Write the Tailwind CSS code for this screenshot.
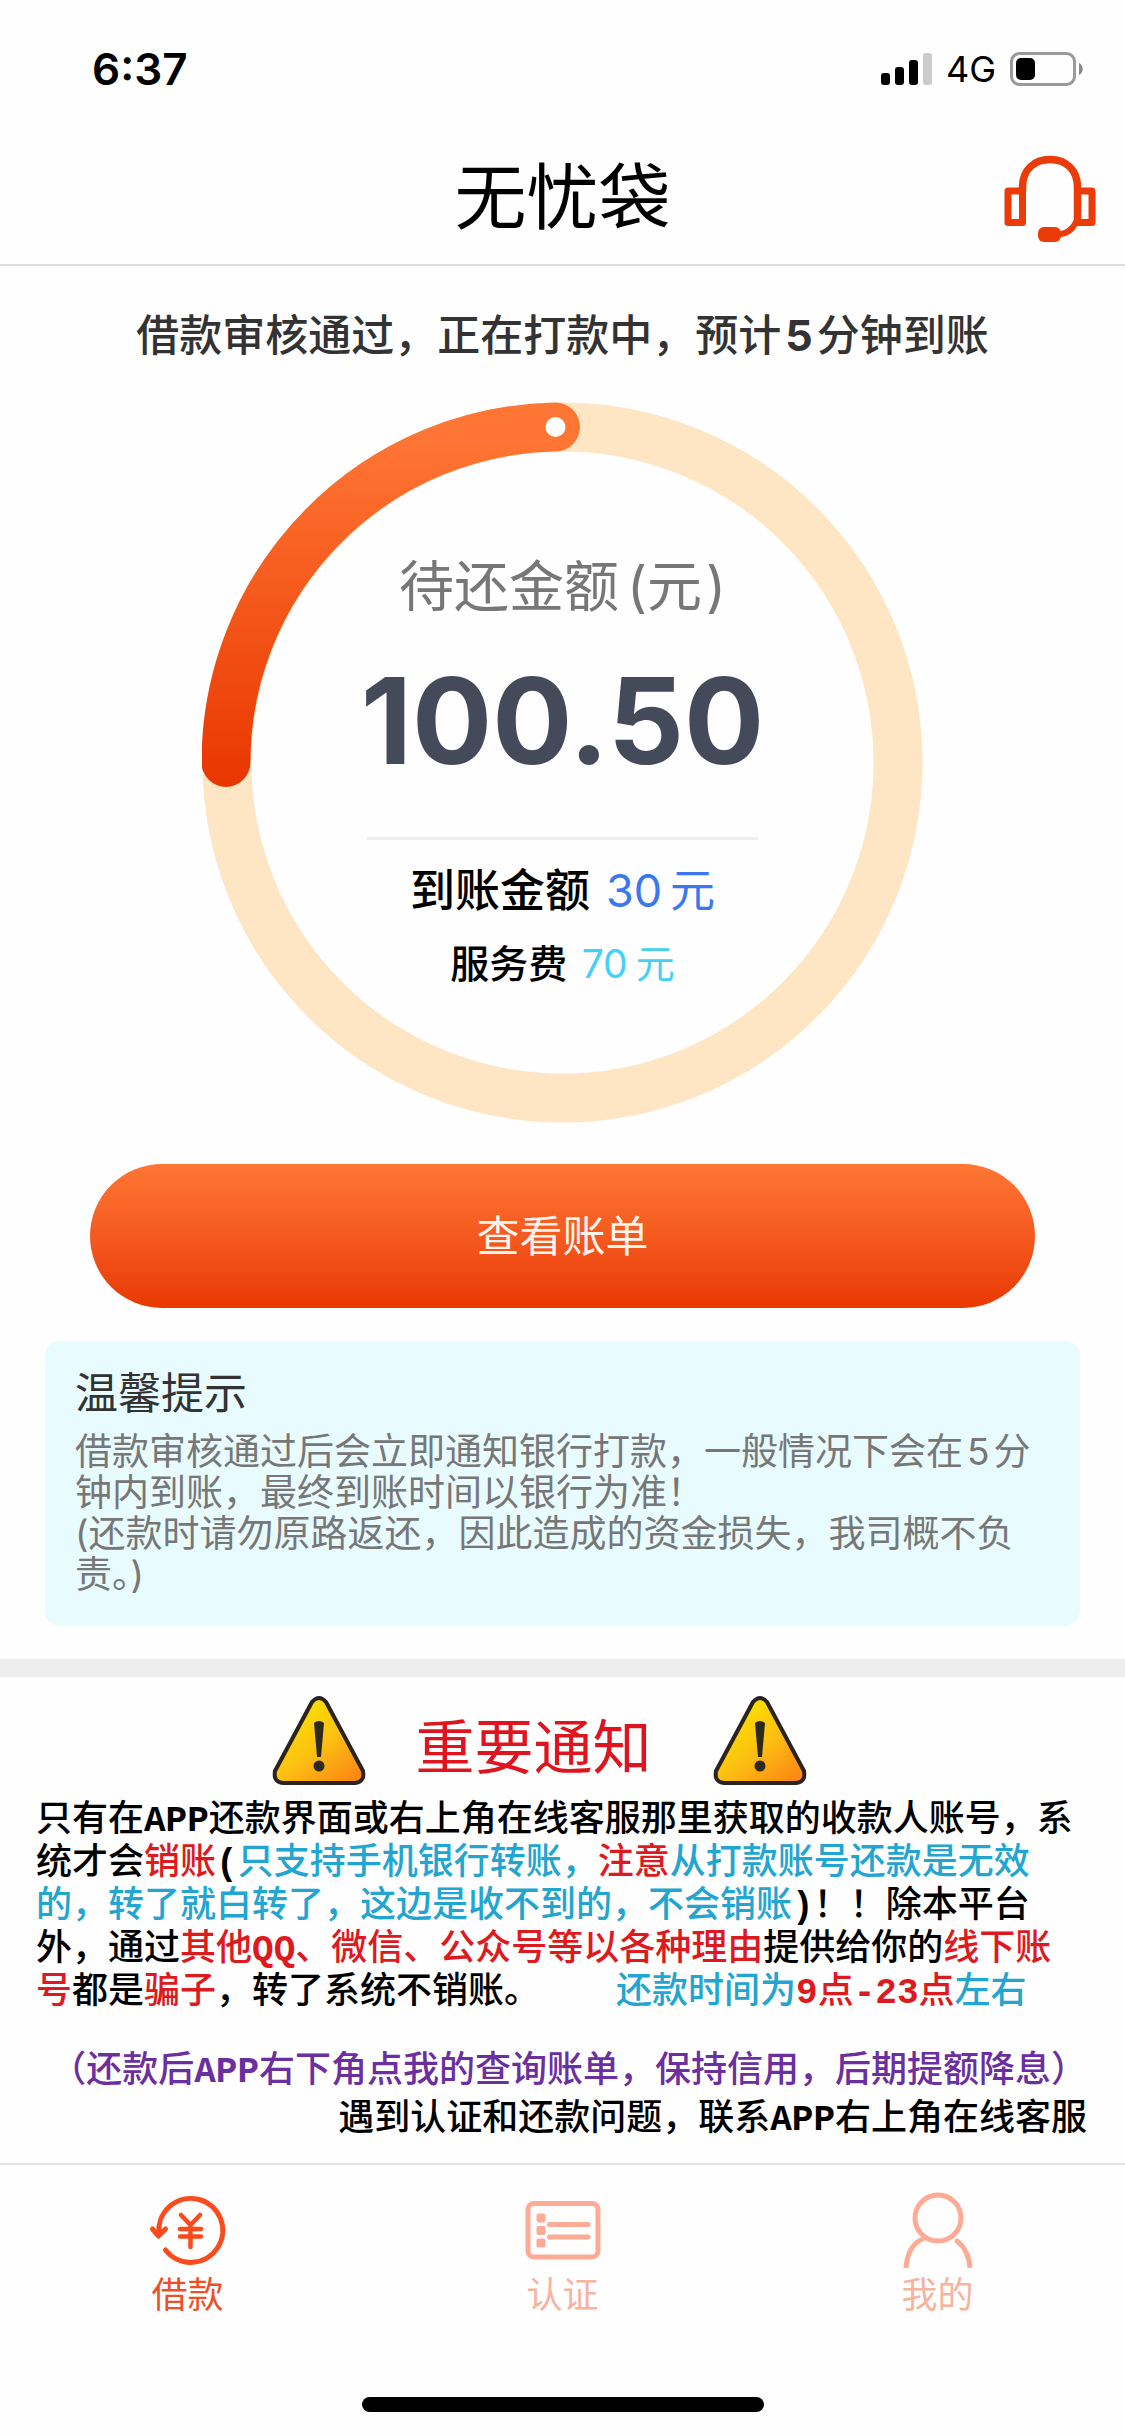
<!DOCTYPE html>
<html lang="zh-CN">
<head>
<meta charset="utf-8">
<meta name="viewport" content="width=device-width, initial-scale=1">
<title>无忧袋</title>
<script src="https://cdn.jsdelivr.net/npm/@tailwindcss/browser@4"></script>
</head>
<body class="bg-[#fefefe] font-['Inter','Noto_Sans_CJK_SC',sans-serif] text-black">
<div class="flex min-h-screen flex-col">

  <!-- Status bar -->
  <div class="flex h-[130px] items-center justify-between pt-2 pr-[42px] pl-[92px]">
    <span class="text-[44px] leading-none font-semibold">6:37</span>
    <div class="flex items-center gap-[14px]">
      <svg class="h-8 w-[51px]" viewBox="0 0 51 32" aria-hidden="true">
        <rect x="0" y="20" width="9" height="12" rx="3"/>
        <rect x="14" y="14" width="9" height="18" rx="3"/>
        <rect x="28" y="7" width="9" height="25" rx="3"/>
        <rect x="42" y="0" width="9" height="32" rx="3" fill="#cbcbcb"/>
      </svg>
      <span class="text-[36px] leading-none">4G</span>
      <svg class="h-[34px] w-[73px]" viewBox="0 0 73 34" aria-hidden="true">
        <rect x="1.5" y="1.5" width="63" height="31" rx="8" fill="none" stroke="#9a9a9a" stroke-width="3"/>
        <rect x="6" y="6" width="19" height="22" rx="5"/>
        <path d="M69 11c5 2 5 10 0 12z" fill="#8a8a8a"/>
      </svg>
    </div>
  </div>

  <!-- Title bar -->
  <header class="grid h-[136px] grid-cols-[1fr_auto_1fr] items-center border-b-2 border-[#dcdcdc] px-[29px]">
    <h1 class="col-start-2 text-[72px] leading-none">无忧袋</h1>
    <button type="button" aria-label="在线客服" class="justify-self-end pt-1">
      <svg class="h-[88px] w-[92px]" viewBox="0 0 92 88" fill="none" stroke="#ea3b08" aria-hidden="true">
        <path d="M18.500 36V32C18.500 15 30 4.500 46 4.500s27.500 10.500 27.500 27.500v32" stroke-width="7.500"/>
        <path d="M4 36H18.500V67.500H4Z" stroke-width="7" stroke-linejoin="round"/>
        <path d="M73.500 36H88V67.500H73.500Z" stroke-width="7" stroke-linejoin="round"/>
        <path d="M74 62C70 74 64 79 55 79" stroke-width="6"/>
        <rect x="34" y="72" width="23" height="15" rx="6" fill="#ea3b08" stroke="none"/>
      </svg>
    </button>
  </header>

  <main>
    <h2 class="pt-[39px] text-center text-[43px] leading-[60px] font-medium text-[#333]">借款审核通过，正在打款中，预计<span class="mx-1 font-bold">5</span>分钟到账</h2>

    <!-- Progress ring with amounts -->
    <section class="mx-auto mt-[37px] grid w-[721px] max-w-full">
      <svg class="col-start-1 row-start-1 w-full" viewBox="0 0 722 722" fill="none" aria-hidden="true">
        <defs>
          <linearGradient id="arc" gradientUnits="userSpaceOnUse" x1="0" y1="0" x2="0" y2="385">
            <stop offset="0.1" stop-color="#ff7533"/>
            <stop offset="1" stop-color="#e93600"/>
          </linearGradient>
        </defs>
        <circle cx="361" cy="361" r="336" stroke="#fee6c4" stroke-width="49"/>
        <path d="M24 361A336 336 0 0 1 354 25" stroke="url(#arc)" stroke-width="49" stroke-linecap="round"/>
        <circle cx="354" cy="25" r="10" fill="#fff"/>
      </svg>
      <div class="col-start-1 row-start-1 flex flex-col items-center pt-[154px]">
        <p class="text-[55px] leading-[60px] text-[#777]">待还金额<span class="ml-2">(</span>元<span class="ml-1">)</span></p>
        <p class="mt-[45px] text-[119px] leading-[120px] font-bold text-[#444a59]">100.50</p>
        <hr class="mt-14 h-[3px] w-[391px] border-0 bg-[#eee]">
        <p class="mt-[26px] text-[45px] leading-[50px] font-medium">到账金额 <span class="ml-1 font-normal text-[#3b78f0]">30<span class="ml-2">元</span></span></p>
        <p class="mt-[23px] text-[39px] leading-[50px] font-medium">服务费 <span class="ml-1 font-normal text-[#45d0f8]">70<span class="ml-2">元</span></span></p>
      </div>
    </section>

    <div class="px-[90px] pt-[41px]">
      <button type="button" class="h-[144px] w-full rounded-[80px] bg-linear-to-b from-[#ff7633] to-[#e93700] text-[43px] text-[#fff3ec]">查看账单</button>
    </div>

    <!-- Tips -->
    <section class="mx-[45px] mt-[33px] rounded-[15px] bg-[#e8fbfe] pt-[22px] pr-10 pb-[31px] pl-[30px]">
      <h3 class="text-[43px] leading-[60px] text-[#333]">温馨提示</h3>
      <p class="mt-2 text-[37px] leading-[41px] text-[#777]">借款审核通过后会立即通知银行打款，一般情况下会在<span class="mx-1">5</span>分钟内到账，最终到账时间以银行为准！<br>(还款时请勿原路返还，因此造成的资金损失，我司概不负责。)</p>
    </section>

    <div class="mt-[33px] h-[18px] bg-[#ededed]"></div>

    <!-- Notice -->
    <section class="pr-[38px] pl-9 text-[36px] leading-[43px] font-medium">
      <div class="mt-[18px] flex items-start justify-center gap-12 pr-11">
        <svg class="h-[91px] w-[96px]" viewBox="0 0 96 91" aria-hidden="true">
          <defs>
            <linearGradient id="warn" x1="0" y1="0" x2="0.8" y2="1">
              <stop offset="0.2" stop-color="#f8e000"/>
              <stop offset="0.6" stop-color="#fdc012"/>
              <stop offset="1" stop-color="#fb8a14"/>
            </linearGradient>
          </defs>
          <path d="M41 7Q48-1 55 7L92 76Q94 87 84 88H12Q2 87 4 76Z" fill="url(#warn)" stroke="#2a2320" stroke-width="4"/>
          <path d="M43 28Q48 24 53 28L50 62H46Z" fill="#2c2a1e"/>
          <circle cx="48" cy="71" r="5.500" fill="#2c2a1e"/>
        </svg>
        <h3 class="mt-[18px] text-[59px] leading-[70px] font-normal text-[#e0141e]">重要通知</h3>
        <svg class="ml-3 h-[91px] w-[96px]" viewBox="0 0 96 91" aria-hidden="true">
          <path d="M41 7Q48-1 55 7L92 76Q94 87 84 88H12Q2 87 4 76Z" fill="url(#warn)" stroke="#2a2320" stroke-width="4"/>
          <path d="M43 28Q48 24 53 28L50 62H46Z" fill="#2c2a1e"/>
          <circle cx="48" cy="71" r="5.500" fill="#2c2a1e"/>
        </svg>
      </div>
      <p class="mt-[11px]">
        只有在<span class="font-['Liberation_Mono',monospace] leading-none font-bold">APP</span>还款界面或右上角在线客服那里获取的收款人账号，系<br>
        统才会<span class="text-[#dd1a20]">销账</span><span class="font-['Liberation_Mono',monospace] leading-none font-bold">(</span><span class="text-[#22a5d0]">只支持手机银行转账，</span><span class="text-[#dd1a20]">注意</span><span class="text-[#22a5d0]">从打款账号还款是无效<br>的，转了就白转了，这边是收不到的，不会销账</span><span class="font-['Liberation_Mono',monospace] leading-none font-bold">)</span>！！除本平台<br>
        外，通过<span class="text-[#dd1a20]">其他<span class="font-['Liberation_Mono',monospace] leading-none font-bold">QQ</span>、微信、公众号等以各种理由</span>提供给你的<span class="text-[#dd1a20]">线下账<br>号</span>都是<span class="text-[#dd1a20]">骗子</span>，转了系统不销账。<span class="ml-[76px] text-[#22a5d0]">还款时间为</span><span class="text-[#dd1a20]"><span class="font-['Liberation_Mono',monospace] leading-none font-bold">9</span>点<span class="font-['Liberation_Mono',monospace] leading-none font-bold">-23</span>点</span><span class="text-[#22a5d0]">左右</span>
      </p>
      <p class="mt-9 text-right text-[#6b2fa0]">（还款后<span class="font-['Liberation_Mono',monospace] leading-none font-bold">APP</span>右下角点我的查询账单，保持信用，后期提额降息）</p>
      <p class="mt-[5px] text-right">遇到认证和还款问题，联系<span class="font-['Liberation_Mono',monospace] leading-none font-bold">APP</span>右上角在线客服</p>
    </section>
  </main>

  <!-- Tab bar -->
  <nav class="mt-auto border-t-2 border-[#e2e2e2] pt-5 pb-6">
    <div class="grid grid-cols-3 text-[36px] leading-10 text-[#f6b39d]">
      <a href="#loan" aria-current="page" class="flex flex-col items-center text-[#ea5128]">
        <svg class="h-[90px] w-[100px]" viewBox="0 0 100 90" fill="none" stroke="#fb4a1c" stroke-width="5" stroke-linecap="round" stroke-linejoin="round" aria-hidden="true">
          <path d="M27.500 65A32 32 0 1 0 21 49"/>
          <path d="M14.500 44l6 7 7-7"/>
          <path d="M43 30l9.500 10L62 30M52.500 40v22M42 44h21M42 51.500h21" stroke-width="4.500"/>
        </svg>
        借款
      </a>
      <a href="#verify" class="flex flex-col items-center">
        <svg class="h-[90px] w-[100px]" viewBox="0 0 100 90" fill="none" stroke="#feab96" stroke-width="5" aria-hidden="true">
          <rect x="15" y="18.500" width="70" height="53.500" rx="6"/>
          <path d="M36.500 39.500H75M36.500 52H75" stroke-linecap="round"/>
          <g fill="#feab96" stroke="none">
            <rect x="23.500" y="28.500" width="9" height="9" rx="2"/>
            <rect x="23.500" y="41" width="9" height="9" rx="2"/>
            <rect x="23.500" y="53.500" width="9" height="9" rx="2"/>
          </g>
        </svg>
        认证
      </a>
      <a href="#mine" class="flex flex-col items-center">
        <svg class="h-[90px] w-[100px]" viewBox="0 0 100 90" fill="none" stroke="#feab96" stroke-width="5" aria-hidden="true">
          <circle cx="50" cy="33" r="23"/>
          <path d="M37 53C25 57 19 68 18 83"/>
          <path d="M69 56C77 62 81 70 82 83"/>
          <circle cx="69" cy="56" r="2.500" fill="#feab96" stroke="none"/>
        </svg>
        我的
      </a>
    </div>
    <div class="mx-auto mt-[82px] h-[15px] w-[402px] rounded-full bg-black"></div>
  </nav>
</div>
</body>
</html>
